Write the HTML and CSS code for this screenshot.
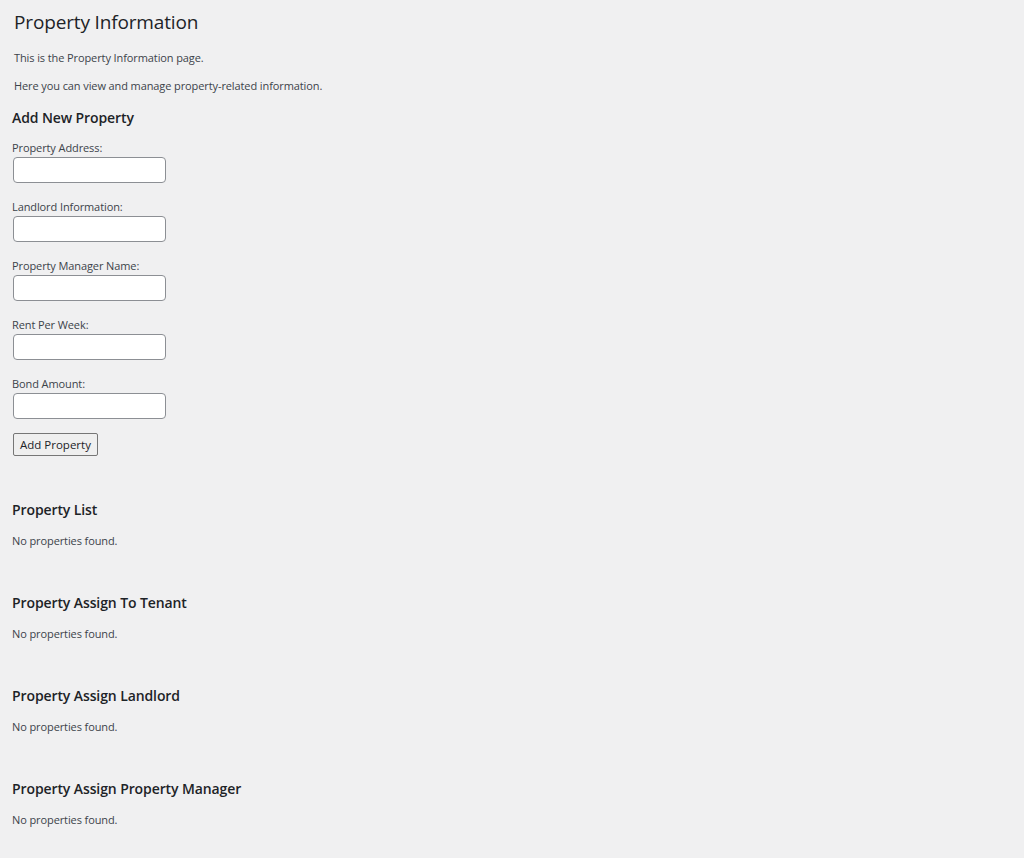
FILE: index.html
```html
<!DOCTYPE html>
<html lang="en">
<head>
    <meta charset="UTF-8">
    <meta name="viewport" content="width=device-width, initial-scale=1.0">
    <title>Property Information</title>
    <link rel="stylesheet" href="styles.css">
</head>
<body>
    <div class="wrap">
        <h1>Property Information</h1>
        <p class="intro">This is the Property Information page.</p>
        <p class="intro">Here you can view and manage property-related information.</p>

        <h2 class="form-title">Add New Property</h2>
        <form id="propertyForm">
            <div class="field">
                <label for="address">Property Address:</label>
                <input type="text" id="address">
            </div>
            <div class="field">
                <label for="landlord">Landlord Information:</label>
                <input type="text" id="landlord">
            </div>
            <div class="field">
                <label for="manager">Property Manager Name:</label>
                <input type="text" id="manager">
            </div>
            <div class="field">
                <label for="rent">Rent Per Week:</label>
                <input type="text" id="rent">
            </div>
            <div class="field">
                <label for="bond">Bond Amount:</label>
                <input type="text" id="bond">
            </div>
            <button type="submit">Add Property</button>
        </form>

        <div class="section first">
            <h2>Property List</h2>
            <p>No properties found.</p>
        </div>
        <div class="section">
            <h2>Property Assign To Tenant</h2>
            <p>No properties found.</p>
        </div>
        <div class="section">
            <h2>Property Assign Landlord</h2>
            <p>No properties found.</p>
        </div>
        <div class="section">
            <h2>Property Assign Property Manager</h2>
            <p>No properties found.</p>
        </div>
    </div>
</body>
</html>
```

FILE: styles.css
```css
body {
    margin: 0;
    background-color: #f0f0f1;
    color: #3c434a;
    font-family: "Open Sans", "Noto Sans", sans-serif;
    font-size: 11px;
    letter-spacing: -0.1px;
}

.wrap {
    padding: 9px 12px 0 12px;
}

h1 {
    margin: 0 0 0 2px;
    font-size: 19px;
    font-weight: 400;
    line-height: 26px;
    letter-spacing: -0.15px;
    color: #1d2327;
}

.intro {
    margin: 10px 0 0 2px;
    line-height: 18px;
}

h1 + .intro {
    margin-top: 14px;
}

h2 {
    margin: 0;
    font-size: 14px;
    font-weight: 600;
    line-height: 20px;
    color: #1d2327;
}

.form-title {
    margin-top: 13px;
    margin-bottom: 11px;
}

.field {
    display: flex;
    flex-direction: column;
    align-items: flex-start;
    gap: 1px;
    margin-bottom: 15px;
}

label {
    line-height: 17px;
}

input {
    box-sizing: border-box;
    width: 153px;
    height: 26px;
    margin-left: 1px;
    padding: 0 8px;
    border: 1px solid #8c8f94;
    border-radius: 4px;
    background: #fff;
    font-family: inherit;
    font-size: 13px;
}

input:focus {
    border-color: #2271b1;
    outline: none;
}

button {
    margin: -1px 0 0 1px;
    height: 23px;
    padding: 0 6px;
    border: 1px solid #767676;
    border-radius: 2px;
    background-color: #efefef;
    color: #1d2327;
    font-family: inherit;
    font-size: 11.5px;
    cursor: pointer;
}

.section {
    margin-top: 43px;
}

.section.first {
    margin-top: 44px;
}

.section p {
    margin: 12px 0 0 0;
    line-height: 18px;
}
```
